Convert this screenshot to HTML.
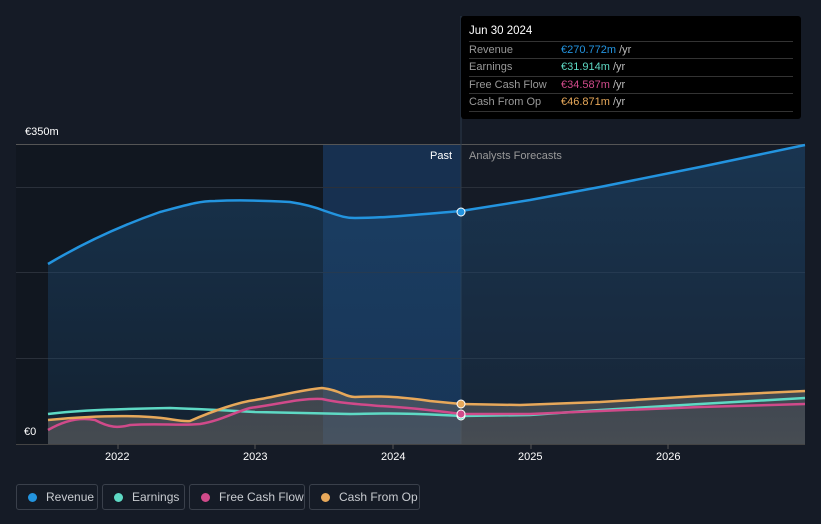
<!DOCTYPE html><html><head><style>
html,body{margin:0;width:821px;height:524px;overflow:hidden}
body{background:#151b26;font-family:"Liberation Sans",sans-serif;position:relative}
.tt{position:absolute;left:461px;top:16px;width:340px;height:103px;background:#000;border-radius:3px;color:#fff;font-size:11px}
.tt .h{position:absolute;left:8px;top:9px;font-size:11.5px}
.row{position:absolute;left:8px;width:324px;border-top:1px solid #333;height:17px;line-height:17px;color:#999}
.row span{position:absolute;left:92px}
.lg{position:absolute;top:484px;height:26px;border:1px solid #3a404b;border-radius:3px;color:#c8cbd0;font-size:12px;line-height:24px;box-sizing:border-box;white-space:nowrap;overflow:hidden}
.lg i{display:inline-block;width:9px;height:9px;border-radius:50%;margin:0 9px 0 11px;vertical-align:-1px}
.ax{position:absolute;color:#fff;font-size:11px}
</style></head><body>
<svg width="821" height="524" style="position:absolute;left:0;top:0">
<defs><linearGradient id="g" x1="0" y1="0" x2="0" y2="1"><stop offset="0" stop-color="#1d4a73" stop-opacity=".55"/><stop offset="1" stop-color="#1d4a73" stop-opacity=".2"/></linearGradient>
<linearGradient id="g2" x1="0" y1="0" x2="0" y2="1"><stop offset="0" stop-color="#666" stop-opacity=".5"/><stop offset="1" stop-color="#666" stop-opacity=".6"/></linearGradient></defs>
<rect x="16" y="144" width="307" height="300" fill="#111720"/>
<rect x="323" y="144" width="138" height="300" fill="#173050"/>
<g stroke="#2a303a" stroke-width="1"><line x1="16" y1="144.5" x2="805" y2="144.5" stroke="#555"/><line x1="16" y1="187.5" x2="805" y2="187.5"/><line x1="16" y1="272.5" x2="805" y2="272.5"/><line x1="16" y1="358.5" x2="805" y2="358.5"/><line x1="16" y1="444.5" x2="805" y2="444.5" stroke="#444"/></g>
<line x1="461" y1="16" x2="461" y2="444" stroke="#2c3a4a"/>
<path d="M48,264 C80,245 120,226 160,212 C190,204 200,201 215,201 C235,200 255,200 290,202 C310,205 320,209 325,211 C340,216 345,218 355,218 C380,218 400,216 461,211 L530,200 L600,187 L700,167 L805,145 L805,444 L48,444Z" fill="url(#g)"/>
<path d="M48,420 C80,417 120,415 150,417 C170,418 180,422 190,421 C215,410 240,402 255,400 C280,396 300,390 322,388 C340,390 345,397 355,397 C380,396 395,396 430,401 L461,404 L520,405 L600,402 L700,396 L805,391 L805,444 L48,444Z" fill="url(#g2)"/>
<g fill="none" stroke-width="2.5">
<path d="M48,264 C80,245 120,226 160,212 C190,204 200,201 215,201 C235,200 255,200 290,202 C310,205 320,209 325,211 C340,216 345,218 355,218 C380,218 400,216 461,211 L530,200 L600,187 L700,167 L805,145" stroke="#2394df"/>
<path d="M48,414 C80,410 120,409 170,408 C200,409 220,410 255,412 C300,413 340,414 350,414 C370,414 395,412 461,416 L530,415 L600,410 L700,404 L805,398" stroke="#5ed9c4"/>
<path d="M48,430 C65,420 80,417 95,420 C110,428 118,428 130,425 C160,423 180,426 200,424 C220,421 235,412 250,408 C280,404 300,398 322,399 C340,403 355,404 380,406 C400,407 430,410 461,414 L530,414 L600,411 L700,407 L805,404" stroke="#d04a8a"/>
<path d="M48,420 C80,417 120,415 150,417 C170,418 180,422 190,421 C215,410 240,402 255,400 C280,396 300,390 322,388 C340,390 345,397 355,397 C380,396 395,396 430,401 L461,404 L520,405 L600,402 L700,396 L805,391" stroke="#e7a85a"/>
</g>
<g stroke="#fff" stroke-width="1"><circle cx="461" cy="212" r="4" fill="#2394df"/><circle cx="461" cy="416" r="4" fill="#5ed9c4"/><circle cx="461" cy="414" r="4" fill="#d04a8a"/><circle cx="461" cy="404" r="4" fill="#e7a85a"/></g>
<g stroke="#555"><line x1="118" y1="444" x2="118" y2="449"/><line x1="255" y1="444" x2="255" y2="449"/><line x1="393" y1="444" x2="393" y2="449"/><line x1="531" y1="444" x2="531" y2="449"/><line x1="668" y1="444" x2="668" y2="449"/></g>
</svg>
<div class="ax" style="left:25px;top:126px">€350m</div>
<div class="ax" style="left:24px;top:426px">€0</div>
<div class="ax" style="left:430px;top:150px">Past</div>
<div class="ax" style="left:469px;top:150px;color:#999">Analysts Forecasts</div>
<div class="ax" style="left:105px;top:451px">2022</div>
<div class="ax" style="left:243px;top:451px">2023</div>
<div class="ax" style="left:381px;top:451px">2024</div>
<div class="ax" style="left:518px;top:451px">2025</div>
<div class="ax" style="left:656px;top:451px">2026</div>
<div class="tt"><div class="h">Jun 30 2024</div>
<div class="row" style="top:25px">Revenue<span style="color:#2394df">€270.772m <b style="font-weight:normal;color:#bbb">/yr</b></span></div>
<div class="row" style="top:42px">Earnings<span style="color:#5ed9c4">€31.914m <b style="font-weight:normal;color:#bbb">/yr</b></span></div>
<div class="row" style="top:60px">Free Cash Flow<span style="color:#d04a8a">€34.587m <b style="font-weight:normal;color:#bbb">/yr</b></span></div>
<div class="row" style="top:77px;border-bottom:1px solid #333">Cash From Op<span style="color:#e7a85a">€46.871m <b style="font-weight:normal;color:#bbb">/yr</b></span></div>
</div>
<div class="lg" style="left:16px;width:82px"><i style="background:#2394df"></i>Revenue</div>
<div class="lg" style="left:102px;width:83px"><i style="background:#5ed9c4"></i>Earnings</div>
<div class="lg" style="left:189px;width:116px"><i style="background:#d04a8a"></i>Free Cash Flow</div>
<div class="lg" style="left:309px;width:111px"><i style="background:#e7a85a"></i>Cash From Op</div>
</body></html>
